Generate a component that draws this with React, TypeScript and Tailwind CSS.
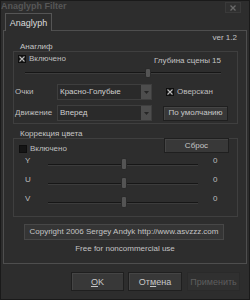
import React from "react";

const Check = ({ checked }: { checked: boolean }) => (
  <div className="w-[8px] h-[8px] bg-[#151515] border border-[#0e0e0e] flex items-center justify-center shrink-0">
    {checked && (
      <svg width="6" height="6" viewBox="0 0 6 6">
        <path d="M0.5 0.5 L5.5 5.5 M5.5 0.5 L0.5 5.5" stroke="#bdbdbd" strokeWidth="1.1" />
      </svg>
    )}
  </div>
);

const Combo = ({ text }: { text: string }) => (
  <div className="w-[95px] h-[16px] bg-[#2a2a2a] border border-[#3e3e3e] flex items-center">
    <span className="ml-[2px] flex-1 text-[#cfcfcf]">{text}</span>
    <div className="w-[10px] h-[14px] bg-[#4d4d4d] flex items-center justify-center">
      <svg width="5" height="3" viewBox="0 0 5 3">
        <path d="M0 0 L5 0 L2.5 3 Z" fill="#262626" />
      </svg>
    </div>
  </div>
);

const Btn = ({ children, w, h = 15 }: { children: React.ReactNode; w: string; h?: number }) => (
  <div
    className={`${w} bg-[#383838] border border-[#1f1f1f] shadow-[inset_1px_1px_0_#454545] flex items-center justify-center text-[#c8c8c8]`}
    style={{ height: h }}
  >
    {children}
  </div>
);

const SliderRow = ({ label }: { label: string }) => (
  <div className="relative h-[19px] flex">
    <span className="absolute left-[11px] top-[2px] leading-[8px] text-[#bdbdbd]">{label}</span>
    <div className="absolute left-[34px] top-[9px] w-[150px] h-[2px] bg-[#161616] border-b border-[#3c3c3c]" />
    <div className="absolute left-[107px] top-[3px] w-[6px] h-[12px] rounded-[2px] bg-[#545454] border border-[#2a2a2a]" />
    <span className="absolute left-[199px] top-[2px] leading-[8px] text-[#bdbdbd]">0</span>
  </div>
);

export default function App() {
  return (
    <div
      className="w-[250px] h-[300px] bg-[#2d2d2d] border border-[#1a1a1a] flex flex-col text-[8px] leading-[10px] text-[#bfbfbf] overflow-hidden"
      style={{ fontFamily: '"Liberation Sans", Arial, sans-serif' }}
    >
      {/* title bar */}
      <div className="h-[12px] flex items-start justify-between">
        <span className="ml-[0px] mt-[0px] text-[9px] leading-[11px] font-bold text-[#575757]">Anaglyph Filter</span>
        <div className="mt-[1px] mr-[8px] w-[16px] h-[11px] border border-[#3a3a3a] bg-[#303030] flex items-center justify-center">
          <svg width="6" height="6" viewBox="0 0 6 6">
            <path d="M0.5 0.5 L5.5 5.5 M5.5 0.5 L0.5 5.5" stroke="#6a6a6a" strokeWidth="1.3" />
          </svg>
        </div>
      </div>

      {/* tab */}
      <div className="h-[17px] pl-[4px] flex relative z-10">
        <div className="w-[47px] h-[18px] border border-b-0 border-[#555] bg-[#2d2d2d] flex items-center justify-center text-[9px] text-[#dcdcdc]">
          Anaglyph
        </div>
      </div>

      {/* panel */}
      <div className="mx-[2px] h-[234px] border border-[#4e4e4e] flex flex-col">
        <div className="mt-[2px] pr-[9px] text-right text-[#c4c4c4]">ver 1.2</div>

        {/* group 1 */}
        <div className="ml-[16px] h-[8px] leading-[8px] text-[#c4c4c4]">Анаглиф</div>
        <div className="ml-[9px] w-[225px] h-[73px] border border-[#3f3f3f] flex flex-col">
          <div className="mt-[2px] h-[10px] flex items-center">
            <div className="ml-[4px]"><Check checked /></div>
            <span className="ml-[3px]">Включено</span>
            <span className="ml-auto mr-[16px] mt-[4px] text-[#c4c4c4]">Глубина сцены 15</span>
          </div>
          <div className="relative mt-[4px] h-[10px]">
            <div className="absolute left-[11px] top-[4px] w-[196px] h-[2px] bg-[#161616] border-b border-[#3c3c3c]" />
            <div className="absolute left-[131px] top-[0px] w-[6px] h-[10px] rounded-[2px] bg-[#545454] border border-[#2a2a2a]" />
          </div>
          <div className="mt-[6px] h-[16px] flex items-center">
            <span className="ml-[1px] w-[42px]">Очки</span>
            <Combo text="Красно-Голубые" />
            <div className="ml-[14px]"><Check checked /></div>
            <span className="ml-[3px]">Оверскан</span>
          </div>
          <div className="mt-[5px] h-[16px] flex items-center">
            <span className="ml-[1px] w-[42px]">Движение</span>
            <Combo text="Вперед" />
            <div className="ml-[11px]">
              <Btn w="w-[65px]">По умолчанию</Btn>
            </div>
          </div>
        </div>

        {/* group 2 */}
        <div className="ml-[16px] mt-[6px] h-[8px] leading-[8px] text-[#c4c4c4]">Коррекция цвета</div>
        <div className="ml-[9px] w-[225px] h-[79px] border border-[#3f3f3f] flex flex-col">
          <div className="mt-[-1px] h-[15px] flex items-end">
            <div className="ml-[5px]"><Check checked={false} /></div>
            <span className="ml-[3px] leading-[8px]">Включено</span>
            <div className="ml-auto mr-[8px]">
              <Btn w="w-[65px]">Сброс</Btn>
            </div>
          </div>
          <div className="mt-[2px]">
            <SliderRow label="Y" />
            <SliderRow label="U" />
            <SliderRow label="V" />
          </div>
        </div>

        <div className="ml-[20px] mt-[7px] w-[200px] h-[16px] bg-[#353535] border border-[#474747] flex items-center justify-center text-[#c4c4c4]">
          Copyright 2006 Sergey Andyk http://www.asvzzz.com
        </div>
        <div className="mt-[4px] text-center text-[#c4c4c4]">Free for noncommercial use</div>
      </div>

      {/* buttons */}
      <div className="mt-[8px] h-[19px] flex text-[9px]">
        <div className="ml-[70px]">
          <Btn w="w-[53px]" h={19}>
            <span><u>O</u>K</span>
          </Btn>
        </div>
        <div className="ml-[4px]">
          <Btn w="w-[54px]" h={19}>
            <span>От<u>м</u>ена</span>
          </Btn>
        </div>
        <div className="ml-[5px] w-[53px] h-[19px] bg-[#303030] border border-[#2a2a2a] flex items-center justify-center text-[#5e5e5e]">
          Применить
        </div>
      </div>
    </div>
  );
}
